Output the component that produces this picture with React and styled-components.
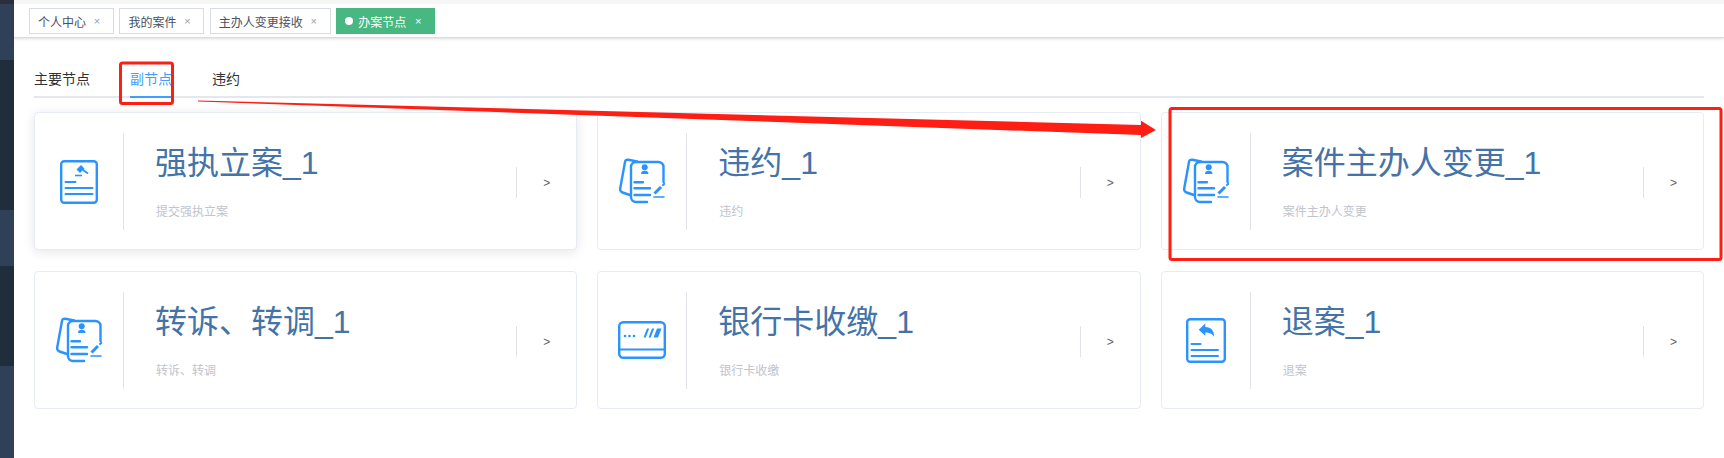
import React from "react";
import styled, { createGlobalStyle } from "styled-components";

const Global = createGlobalStyle`
  html, body { margin: 0; padding: 0; background: #fff; overflow: hidden; }
  body { font-family: "Liberation Sans", "Noto Sans CJK SC", sans-serif; }
  * { box-sizing: border-box; }
`;

const Page = styled.div`
  position: relative;
  display: flex;
  width: 1724px;
  height: 458px;
  overflow: hidden;
`;

const Sidebar = styled.aside`
  flex: 0 0 14px;
  display: flex;
  flex-direction: column;
`;

const SideBlock = styled.div`
  height: ${(p) => p.$h}px;
  flex: ${(p) => (p.$fill ? 1 : "none")};
  background: ${(p) => p.$color};
`;

const Main = styled.main`
  flex: 1;
  min-width: 0;
  display: flex;
  flex-direction: column;
  background: #fff;
`;

const TagsBar = styled.div`
  display: flex;
  gap: 5.4px;
  height: 38px;
  padding: 8px 0 0 15px;
  background: linear-gradient(#f6f6f6 0, #f6f6f6 4px, #fff 4px);
  border-bottom: 1px solid #d8dce5;
  box-shadow: 0 1px 3px rgba(0, 0, 0, 0.12), 0 0 3px rgba(0, 0, 0, 0.04);
`;

const Tag = styled.div`
  display: flex;
  align-items: center;
  height: 26px;
  padding: 0 8px;
  border: 1px solid ${(p) => (p.$active ? "#47b881" : "#d8dce5")};
  background: ${(p) => (p.$active ? "#47b881" : "#fff")};
  color: ${(p) => (p.$active ? "#fff" : "#495060")};
  font-size: 12px;
  white-space: nowrap;
`;

const TagDot = styled.span`
  width: 8px;
  height: 8px;
  margin-right: 5px;
  border-radius: 50%;
  background: #fff;
`;

const TagClose = styled.span`
  width: 16px;
  margin-left: ${(p) => (p.$active ? 4 : 3)}px;
  text-align: center;
  font-size: 11px;
  line-height: 16px;
  color: ${(p) => (p.$active ? "#fff" : "#9a9fa8")};
`;

const Content = styled.div`
  flex: 1;
  padding: 0 20px;
`;

const NavTabs = styled.nav`
  display: flex;
  height: 61px;
  margin-top: -1px;
  padding-top: 32px;
  border-bottom: 2px solid #e4e7ed;
`;

const NavTab = styled.div`
  position: relative;
  height: 27px;
  margin-right: ${(p) => p.$gap}px;
  font-size: 14px;
  line-height: 20px;
  color: ${(p) => (p.$active ? "#409eff" : "#303133")};
  &::after {
    content: "";
    display: ${(p) => (p.$active ? "block" : "none")};
    position: absolute;
    left: 0;
    right: 0;
    bottom: -2px;
    height: 2px;
    background: #409eff;
  }
`;

const CardGrid = styled.div`
  display: grid;
  grid-template-columns: repeat(3, 1fr);
  grid-auto-rows: 138px;
  gap: 21px 20px;
  margin-top: 14px;
`;

const Card = styled.article`
  display: flex;
  align-items: center;
  padding: 20px 0 19px;
  border: 1px solid #e6ebf5;
  border-radius: 4px;
  background: #fff;
  box-shadow: ${(p) => (p.$raised ? "0 2px 12px rgba(0, 0, 0, 0.1)" : "none")};
`;

const IconCell = styled.div`
  flex: 0 0 89px;
  align-self: stretch;
  display: flex;
  align-items: center;
  justify-content: center;
  border-right: 1px solid #e0e3e8;
  padding-top: 1px;
  padding-bottom: ${(p) => (p.$lift ? 2 : 0)}px;
`;

const CardBody = styled.div`
  flex: 1;
  min-width: 0;
  padding: 7px 0 0 32px;
  align-self: stretch;
`;

const CardTitle = styled.h3`
  margin: 0 0 0 -1px;
  font-size: 32px;
  font-weight: 400;
  line-height: 46px;
  color: #4473a8;
  white-space: nowrap;
`;

const CardDesc = styled.p`
  margin: 18px 0 0;
  font-size: 12px;
  line-height: 16px;
  color: #c0c4cc;
`;

const CardArrow = styled.div`
  flex: 0 0 60px;
  height: 31px;
  margin-top: 2px;
  display: flex;
  align-items: center;
  justify-content: center;
  border-left: 1px solid #e0e3e8;
  font-size: 12px;
  color: #606266;
`;

const Annotations = styled.svg`
  position: absolute;
  inset: 0;
  width: 1724px;
  height: 458px;
  pointer-events: none;
`;

const BLUE = "#2a93ff";

const Line = ({ x1, x2, y, w = 2 }) => (
  <path d={`M${x1} ${y}H${x2}`} stroke={BLUE} strokeWidth={w} strokeLinecap="round" fill="none" />
);

const GavelIcon = () => (
  <svg width="38" height="44" viewBox="0 0 38 44">
    <rect x="1.2" y="1.2" width="35.6" height="41.6" rx="3" fill="none" stroke={BLUE} strokeWidth="2.4" />
    <path d="M16.5 9.5L21 5L24.5 8.5L20 13Z" fill={BLUE} />
    <path d="M21 8.5L28 13.5" stroke={BLUE} strokeWidth="1.8" fill="none" />
    <path d="M15 15.5H22" stroke={BLUE} strokeWidth="1.6" fill="none" />
    <Line x1="5.5" x2="15.5" y="22" />
    <Line x1="5.5" x2="32.5" y="28" />
    <Line x1="5.5" x2="32.5" y="34" />
  </svg>
);

const StackIcon = () => (
  <svg width="46" height="46" viewBox="0 0 46 46">
    <g fill="none" stroke={BLUE} strokeWidth="2.4" strokeLinecap="round">
      <path d="M18 3.5L9.5 1.8Q6.5 1.2 6 4L1.2 30.5Q.7 33.5 3.5 34.5L11 37" />
      <path d="M44.5 24V9a5 5 0 0 0-5-5H17a5 5 0 0 0-5 5V39a5 5 0 0 0 5 5H28" />
      <path d="M15.5 24.3H24M15.5 30.3H31M15.5 37H31" />
      <path d="M35.5 35.5L42 29" strokeWidth="3" strokeLinecap="butt" />
      <path d="M44 27L45.5 25.5" strokeWidth="2" />
      <path d="M35 39H45" strokeWidth="1.6" />
    </g>
    <circle cx="25.7" cy="9.3" r="3" fill={BLUE} />
    <path d="M22 16Q22 12.8 25.7 12.8Q29.5 12.8 29.5 16Z" fill={BLUE} />
  </svg>
);

const BankCardIcon = () => (
  <svg width="48" height="38" viewBox="0 0 48 38">
    <rect x="1.2" y="1.2" width="45.6" height="35.6" rx="4" fill="none" stroke={BLUE} strokeWidth="2.4" />
    <path d="M1 28.5H47" stroke={BLUE} strokeWidth="2.2" />
    <circle cx="7" cy="15" r="1.3" fill={BLUE} />
    <circle cx="11.5" cy="15" r="1.3" fill={BLUE} />
    <circle cx="16" cy="15" r="1.3" fill={BLUE} />
    <path d="M25.5 16.5L29 7.5H31.2L27.7 16.5ZM30.5 16.5L34 7.5H36.2L32.7 16.5ZM35.5 16.5L39 7.5H43.5L40 16.5Z" fill={BLUE} />
  </svg>
);

const RefundIcon = () => (
  <svg width="40" height="45" viewBox="0 0 40 45">
    <rect x="1.2" y="1.2" width="37.6" height="42.6" rx="3" fill="none" stroke={BLUE} strokeWidth="2.4" />
    <path d="M12.7 11.7L19.3 5.4V9C25 9 28.5 13 28 18.7C26 15.5 23.5 14.5 19.3 14.5V17.7Z" fill={BLUE} />
    <Line x1="5.5" x2="14.5" y="26" />
    <Line x1="5.5" x2="32" y="32" />
    <Line x1="5.5" x2="32" y="38" />
  </svg>
);

const tags = ["个人中心", "我的案件", "主办人变更接收"];

const cards = [
  { title: "强执立案_1", desc: "提交强执立案", icon: <GavelIcon />, raised: true },
  { title: "违约_1", desc: "违约", icon: <StackIcon />, lift: true },
  { title: "案件主办人变更_1", desc: "案件主办人变更", icon: <StackIcon />, lift: true },
  { title: "转诉、转调_1", desc: "转诉、转调", icon: <StackIcon />, lift: true },
  { title: "银行卡收缴_1", desc: "银行卡收缴", icon: <BankCardIcon />, lift: true },
  { title: "退案_1", desc: "退案", icon: <RefundIcon />, lift: true },
];

export default function App() {
  return (
    <Page>
      <Global />
      <Sidebar>
        <SideBlock $h={4} $color="#2b2f3a" />
        <SideBlock $h={56} $color="#2f4059" />
        <SideBlock $h={150} $color="#1f2d3d" />
        <SideBlock $h={56} $color="#2f4059" />
        <SideBlock $h={100} $color="#1f2d3d" />
        <SideBlock $fill $color="#2f4059" />
      </Sidebar>
      <Main>
        <TagsBar>
          {tags.map((t) => (
            <Tag key={t}>
              {t}
              <TagClose>×</TagClose>
            </Tag>
          ))}
          <Tag $active>
            <TagDot />
            办案节点
            <TagClose $active>×</TagClose>
          </Tag>
        </TagsBar>
        <Content>
          <NavTabs>
            <NavTab $gap={40}>主要节点</NavTab>
            <NavTab $gap={40} $active>副节点</NavTab>
            <NavTab $gap={0}>违约</NavTab>
          </NavTabs>
          <CardGrid>
            {cards.map((c) => (
              <Card key={c.title} $raised={c.raised}>
                <IconCell $lift={c.lift}>{c.icon}</IconCell>
                <CardBody>
                  <CardTitle>{c.title}</CardTitle>
                  <CardDesc>{c.desc}</CardDesc>
                </CardBody>
                <CardArrow>&gt;</CardArrow>
              </Card>
            ))}
          </CardGrid>
        </Content>
      </Main>
      <Annotations viewBox="0 0 1724 458">
        <rect x="120.5" y="63" width="52" height="40.5" rx="2" fill="none" stroke="#ff1e14" strokeWidth="3" />
        <rect x="1170" y="108.5" width="551" height="151" rx="2" fill="none" stroke="#ff1e14" strokeWidth="3" />
        <path d="M198 100.5L1141 125V120.7L1156 130L1141 138V135L198 101.5Z" fill="#ff1e14" />
      </Annotations>
    </Page>
  );
}
